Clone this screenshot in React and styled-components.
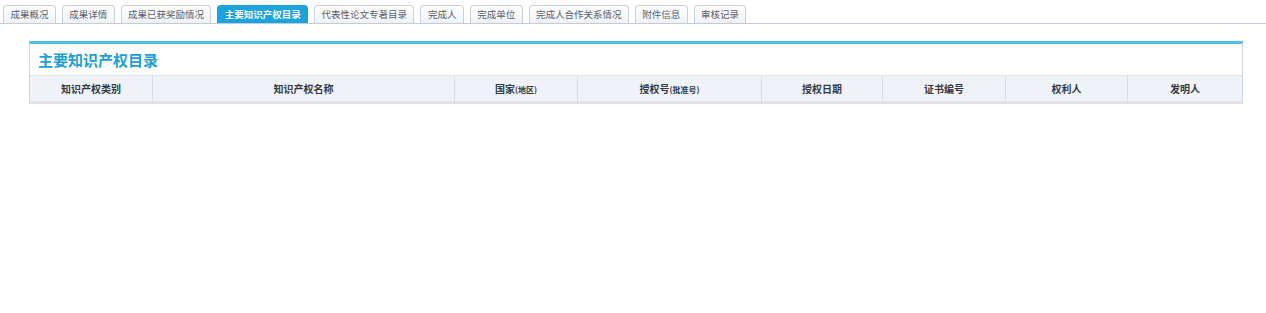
import React from "react";
import styled, { createGlobalStyle } from "styled-components";

const tabs = [
  "成果概况",
  "成果详情",
  "成果已获奖励情况",
  "主要知识产权目录",
  "代表性论文专著目录",
  "完成人",
  "完成单位",
  "完成人合作关系情况",
  "附件信息",
  "审核记录",
];

const columns = [
  { label: "知识产权类别", width: 122 },
  { label: "知识产权名称", width: 301 },
  { label: "国家", small: "(地区)", width: 122 },
  { label: "授权号", small: "(批准号)", width: 183 },
  { label: "授权日期", width: 120 },
  { label: "证书编号", width: 122 },
  { label: "权利人", width: 121 },
  { label: "发明人" },
];

export default function App() {
  return (
    <Page>
      <GlobalStyle />
      <TabBar>
        {tabs.map((t) => (
          <Tab key={t} $active={t === "主要知识产权目录"}>
            {t}
          </Tab>
        ))}
      </TabBar>
      <Panel>
        <PanelTitle>主要知识产权目录</PanelTitle>
        <Table>
          <thead>
            <tr>
              {columns.map((c) => (
                <HeadCell key={c.label} $width={c.width}>
                  {c.label}
                  {c.small && <Small>{c.small}</Small>}
                </HeadCell>
              ))}
            </tr>
          </thead>
        </Table>
      </Panel>
    </Page>
  );
}

const GlobalStyle = createGlobalStyle`
  body {
    margin: 0;
    background: #ffffff;
    font-family: "Noto Sans CJK SC", "Microsoft YaHei", sans-serif;
  }
`;

const Page = styled.div`
  width: 1266px;
  height: 313px;
  background: #ffffff;
`;

const TabBar = styled.div`
  display: flex;
  align-items: flex-end;
  gap: 6px;
  padding: 5px 0 0 3px;
  border-bottom: 1px solid #c3ccd8;
  height: 18px;
`;

const Tab = styled.div`
  height: 17px;
  padding: 0 6.4px;
  display: flex;
  align-items: center;
  font-size: 9.5px;
  line-height: 17px;
  white-space: nowrap;
  border: 1px solid ${(p) => (p.$active ? "#1aa0d8" : "#c8d0da")};
  border-bottom: none;
  border-radius: 4px 4px 0 0;
  color: ${(p) => (p.$active ? "#ffffff" : "#5a606a")};
  font-weight: ${(p) => (p.$active ? 700 : 400)};
  background: ${(p) =>
    p.$active ? "#1aa3dc" : "linear-gradient(#ffffff, #eef2f7)"};
`;

const Panel = styled.div`
  margin: 17px 0 0 29px;
  width: 1214px;
  border-top: 3px solid #4fbde6;
  border-left: 1px solid #cfd6df;
  border-right: 1px solid #cfd6df;
  border-bottom: 1px solid #dde2e8;
  box-sizing: border-box;
`;

const PanelTitle = styled.div`
  height: 31px;
  padding-left: 8px;
  display: flex;
  align-items: center;
  font-size: 15px;
  font-weight: 700;
  color: #1b9fd6;
  border-bottom: 1px solid #dfe4ea;
`;

const Table = styled.table`
  width: 100%;
  border-collapse: collapse;
  table-layout: fixed;
  border-bottom: 2px solid #dfe4ea;
`;

const HeadCell = styled.th`
  width: ${(p) => (p.$width ? `${p.$width}px` : "auto")};
  height: 25px;
  padding: 0;
  font-size: 10px;
  font-weight: 700;
  color: #333a44;
  background: #eff2f7;
  border-left: 1px solid #d6dde6;
  text-align: center;
  &:first-child {
    border-left: none;
  }
`;

const Small = styled.span`
  font-size: 8px;
  font-weight: 700;
`;
